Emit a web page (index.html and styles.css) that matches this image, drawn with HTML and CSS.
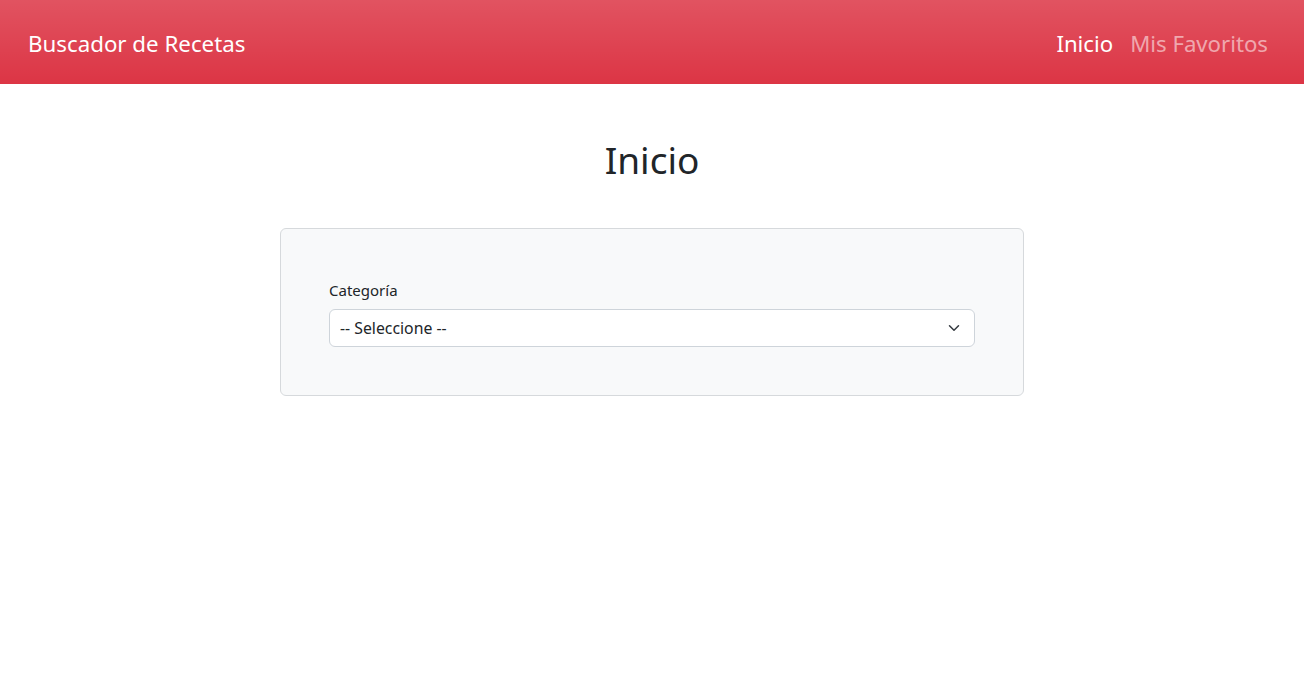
FILE: index.html
```html
<!DOCTYPE html>
<html lang="es">
<head>
<meta charset="utf-8">
<title>Buscador de Recetas</title>
<link rel="stylesheet" href="styles.css">
</head>
<body>
<header class="navbar">
  <a class="brand" href="#">Buscador de Recetas</a>
  <nav class="nav">
    <a class="nav-link active" href="#">Inicio</a>
    <a class="nav-link" href="#">Mis Favoritos</a>
  </nav>
</header>
<main class="main">
  <h1 class="title">Inicio</h1>
  <form class="card">
    <label class="label" for="categoria">Categoría</label>
    <div class="select-wrap">
      <select id="categoria" class="select">
        <option>-- Seleccione --</option>
      </select>
      <svg class="chevron" width="16" height="12" viewBox="0 0 16 16" aria-hidden="true"><path fill="none" stroke="#343a40" stroke-linecap="round" stroke-linejoin="round" stroke-width="2" d="m2 5 6 6 6-6"/></svg>
    </div>
  </form>
</main>
</body>
</html>
```

FILE: styles.css
```css
* { box-sizing: border-box; }
body {
  margin: 0;
  font-family: "Noto Sans", "Open Sans", sans-serif;
  color: #212529;
  background: #fff;
}
.navbar {
  height: 84px;
  display: flex;
  align-items: center;
  justify-content: space-between;
  padding: 2px 36px 0 28px;
  background: #dc3545 linear-gradient(180deg, rgba(255,255,255,0.15), rgba(255,255,255,0));
}
.brand {
  color: #fff;
  text-decoration: none;
  font-size: 22.3px;
}
.nav {
  display: flex;
  gap: 17px;
}
.nav-link {
  color: rgba(255,255,255,0.55);
  text-decoration: none;
  font-size: 22.2px;
}
.nav-link.active { color: #fff; }
.main {
  display: flex;
  flex-direction: column;
  align-items: center;
}
.title {
  margin: 52px 0 44px;
  font-size: 37px;
  line-height: 48px;
  font-weight: 400;
}
.card {
  width: 744px;
  padding: 48px;
  background: #f8f9fa;
  border: 1px solid #d6d9dc;
  border-radius: 6px;
}
.label {
  display: block;
  font-size: 15px;
  line-height: 24px;
  margin-bottom: 8px;
  padding-top: 1px;
  height: 24px;
}
.select-wrap { position: relative; }
.select {
  display: block;
  width: 100%;
  height: 38px;
  padding: 0 36px 0 10px;
  font-family: inherit;
  font-size: 15.8px;
  color: #212529;
  background: #fff;
  border: 1px solid #ced4da;
  border-radius: 6px;
  appearance: none;
  -webkit-appearance: none;
}
.chevron {
  position: absolute;
  right: 13px;
  top: 13px;
  pointer-events: none;
}
```
